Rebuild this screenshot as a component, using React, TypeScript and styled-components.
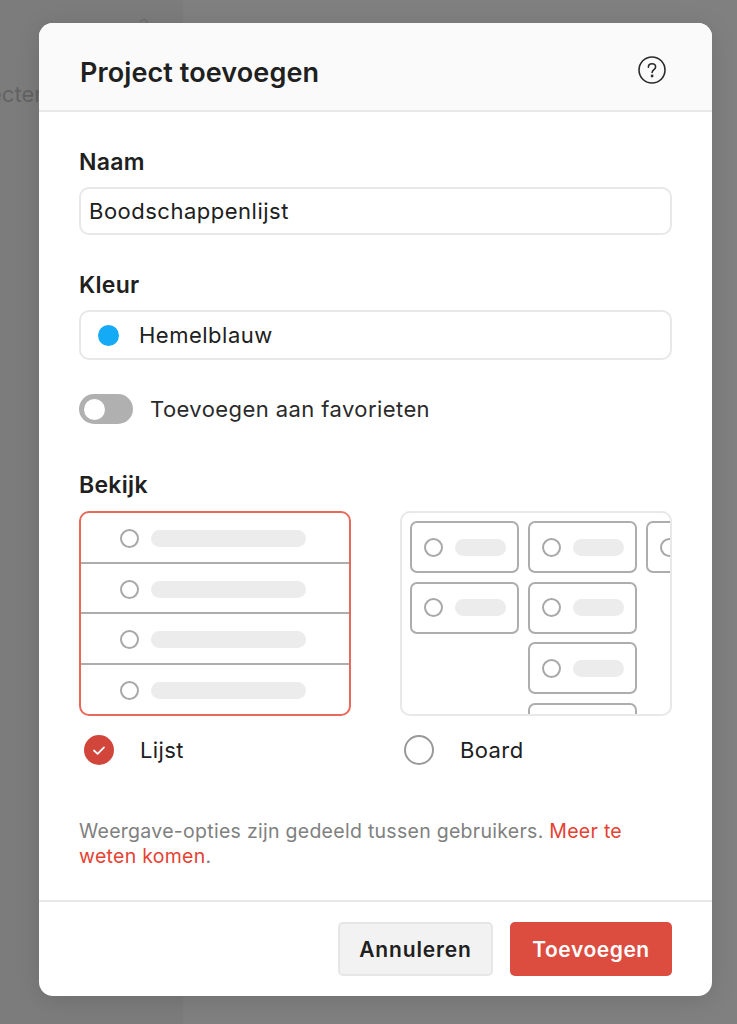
import React from "react";
import styled, { createGlobalStyle } from "styled-components";

const Global = createGlobalStyle`
  html, body { margin: 0; padding: 0; height: 100%; background: #808080; }
  body { font-family: Inter, "Liberation Sans", sans-serif; color: #202020; overflow: hidden; }
  * { box-sizing: border-box; }
`;

const Page = styled.div`
  position: relative;
  width: 737px;
  height: 1024px;
  overflow: hidden;
  display: flex;
  background: #808080;
`;

const Sidebar = styled.aside`
  width: 183px;
  height: 100%;
  background: #7c7c7c;
  color: #3a3a3a;
  font-size: 22px;
`;

const SideRow = styled.div`
  display: flex;
  justify-content: space-between;
  height: 24px;
  margin: 13px 34px 0 -13px;
  line-height: 24px;
`;

const SideCount = styled.span`
  font-size: 16px;
  color: #6e6e6e;
`;

const SideMuted = styled.div`
  margin: 45px 0 0 -11px;
  font-size: 22px;
  line-height: 24px;
  color: #636363;
  white-space: nowrap;
`;

const Modal = styled.div`
  position: absolute;
  left: 39px;
  top: 23px;
  width: 673px;
  height: 973px;
  background: #fff;
  border-radius: 14px;
  overflow: hidden;
  display: flex;
  flex-direction: column;
  box-shadow: 0 4px 24px rgba(0, 0, 0, 0.12);
`;

const Header = styled.header`
  height: 89px;
  flex: none;
  display: flex;
  align-items: center;
  justify-content: space-between;
  padding: 0 46px 0 41px;
  background: #fafafa;
  border-bottom: 2px solid #e8e8e8;
`;

const Title = styled.h1`
  margin: 12px 0 0;
  font-size: 27px;
  line-height: 32px;
  font-weight: 600;
  letter-spacing: 0.1px;
  color: #202020;
`;

const HelpSlot = styled.span`
  display: flex;
  margin-top: 6px;
`;

const Body = styled.div`
  flex: 1;
  padding: 37px 40px 0 40px;
  display: flex;
  flex-direction: column;
`;

const Label = styled.div<{ $gap?: number }>`
  margin-top: ${(p) => p.$gap ?? 0}px;
  font-size: 23px;
  line-height: 26px;
  font-weight: 600;
  letter-spacing: 0.3px;
  color: #202020;
`;

const Field = styled.div<{ $h: number; $gap: number }>`
  height: ${(p) => p.$h}px;
  margin-top: ${(p) => p.$gap}px;
  display: flex;
  align-items: center;
  padding: 0 8px;
  border: 2px solid #e8e8e8;
  border-radius: 10px;
  font-size: 22px;
  letter-spacing: 0.5px;
  color: #202020;
`;

const Swatch = styled.span`
  width: 21px;
  height: 21px;
  margin: 0 20px 0 9px;
  border-radius: 50%;
  background: #14aaf5;
`;

const ToggleRow = styled.div`
  display: flex;
  align-items: center;
  gap: 17px;
  margin-top: 34px;
  font-size: 22px;
  letter-spacing: 0.42px;
  color: #2a2a2a;
`;

const Toggle = styled.span`
  width: 54px;
  height: 30px;
  padding: 0 5px;
  border-radius: 15px;
  background: #b0b0b0;
  display: flex;
  align-items: center;
`;

const Knob = styled.span`
  width: 21px;
  height: 21px;
  border-radius: 50%;
  background: #fff;
`;

const Views = styled.div`
  display: grid;
  grid-template-columns: 272px 272px;
  justify-content: space-between;
  margin-top: 13px;
`;

const Preview = styled.div<{ $on?: boolean }>`
  height: 205px;
  border: 2px solid ${(p) => (p.$on ? "#e8685b" : "#e8e8e8")};
  border-radius: 10px;
  overflow: hidden;
`;

const ListRow = styled.div`
  height: 50.5px;
  display: flex;
  align-items: center;
  gap: 12px;
  padding: 3px 0 0 39px;
  border-bottom: 2px solid #adadad;
  &:last-child { border-bottom-color: transparent; }
`;

const Dot = styled.span`
  width: 19px;
  height: 19px;
  flex: none;
  border: 2px solid #a8a8a8;
  border-radius: 50%;
  background: #fff;
`;

const Bar = styled.span<{ $w: number }>`
  width: ${(p) => p.$w}px;
  height: 17px;
  flex: none;
  border-radius: 9px;
  background: #ececec;
`;

const Board = styled(Preview)`
  display: flex;
  gap: 9px;
  padding: 8px 0 0 8px;
`;

const Column = styled.div`
  width: 109px;
  flex: none;
  display: flex;
  flex-direction: column;
  gap: 8.6px;
`;

const Card = styled.div`
  height: 52px;
  flex: none;
  display: flex;
  align-items: center;
  gap: 12px;
  padding-left: 12px;
  border: 2px solid #adadad;
  border-radius: 7px;
`;

const Choice = styled.div`
  display: flex;
  align-items: center;
  height: 30px;
  margin-top: 19px;
  font-size: 22px;
  letter-spacing: 0.4px;
  color: #202020;
`;

const RadioSlot = styled.span<{ $inset: number; $width: number }>`
  width: ${(p) => p.$width}px;
  padding-left: ${(p) => p.$inset}px;
  display: flex;
`;

const Radio = styled.span<{ $on?: boolean }>`
  width: 30px;
  height: 30px;
  border-radius: 50%;
  display: flex;
  align-items: center;
  justify-content: center;
  background: ${(p) => (p.$on ? "#d1453b" : "#fff")};
  border: ${(p) => (p.$on ? "none" : "2px solid #999")};
`;

const Note = styled.p`
  margin: 54px 30px 0 0;
  font-size: 19.5px;
  line-height: 25px;
  letter-spacing: 0.28px;
  color: #808080;
`;

const NoteLink = styled.span`
  color: #e44232;
`;

const Footer = styled.footer`
  height: 96px;
  flex: none;
  display: flex;
  align-items: center;
  justify-content: flex-end;
  gap: 17px;
  padding: 0 40px 0 0;
  border-top: 2px solid #e8e8e8;
`;

const Button = styled.button<{ $primary?: boolean }>`
  height: 54px;
  width: ${(p) => (p.$primary ? 162 : 155)}px;
  padding: 0;
  border-radius: 5px;
  font-family: Inter, "Liberation Sans", sans-serif;
  font-size: 21px;
  font-weight: 600;
  letter-spacing: ${(p) => (p.$primary ? 0.55 : 0.85)}px;
  color: ${(p) => (p.$primary ? "#fff" : "#202020")};
  background: ${(p) => (p.$primary ? "#dc4c3f" : "#f2f2f2")};
  border: ${(p) => (p.$primary ? "none" : "2px solid #e6e6e6")};
`;

const Help = () => (
  <svg width="28" height="28" viewBox="0 0 28 28" fill="none" stroke="#2b2b2b" strokeWidth="1.6" strokeLinecap="round">
    <circle cx="14" cy="14" r="13" />
    <path d="M10.4 11.2c0-2.1 1.6-3.4 3.6-3.4s3.6 1.3 3.6 3.1c0 2.6-3.5 2.7-3.5 5.5" />
    <circle cx="14.1" cy="20" r="0.6" fill="#2b2b2b" />
  </svg>
);

const Check = () => (
  <svg width="14" height="11" viewBox="0 0 14 11" fill="none" stroke="#fff" strokeWidth="1.8" strokeLinecap="round" strokeLinejoin="round">
    <path d="M2 5.5 5.6 8.8 12 2.4" />
  </svg>
);

const MiniCard = () => (
  <Card>
    <Dot />
    <Bar $w={51} />
  </Card>
);

const boardColumns = [2, 4, 1];

export default function App() {
  return (
    <Page>
      <Global />
      <Sidebar>
        <SideRow>
          <span>n</span>
          <SideCount>3</SideCount>
        </SideRow>
        <SideMuted>ecter</SideMuted>
      </Sidebar>
      <Modal>
        <Header>
          <Title>Project toevoegen</Title>
          <HelpSlot>
            <Help />
          </HelpSlot>
        </Header>
        <Body>
          <Label>Naam</Label>
          <Field $h={48} $gap={12}>Boodschappenlijst</Field>
          <Label $gap={37}>Kleur</Label>
          <Field $h={50} $gap={12}>
            <Swatch />
            Hemelblauw
          </Field>
          <ToggleRow>
            <Toggle>
              <Knob />
            </Toggle>
            Toevoegen aan favorieten
          </ToggleRow>
          <Label $gap={48}>Bekijk</Label>
          <Views>
            <div>
              <Preview $on>
                {[0, 1, 2, 3].map((i) => (
                  <ListRow key={i}>
                    <Dot />
                    <Bar $w={155} />
                  </ListRow>
                ))}
              </Preview>
              <Choice>
                <RadioSlot $inset={5} $width={61}>
                  <Radio $on>
                    <Check />
                  </Radio>
                </RadioSlot>
                Lijst
              </Choice>
            </div>
            <div>
              <Board>
                {boardColumns.map((n, c) => (
                  <Column key={c}>
                    {Array.from({ length: n }, (_, i) => (
                      <MiniCard key={i} />
                    ))}
                  </Column>
                ))}
              </Board>
              <Choice>
                <RadioSlot $inset={4} $width={60}>
                  <Radio />
                </RadioSlot>
                Board
              </Choice>
            </div>
          </Views>
          <Note>
            Weergave-opties zijn gedeeld tussen gebruikers. <NoteLink>Meer te weten komen</NoteLink>.
          </Note>
        </Body>
        <Footer>
          <Button>Annuleren</Button>
          <Button $primary>Toevoegen</Button>
        </Footer>
      </Modal>
    </Page>
  );
}
